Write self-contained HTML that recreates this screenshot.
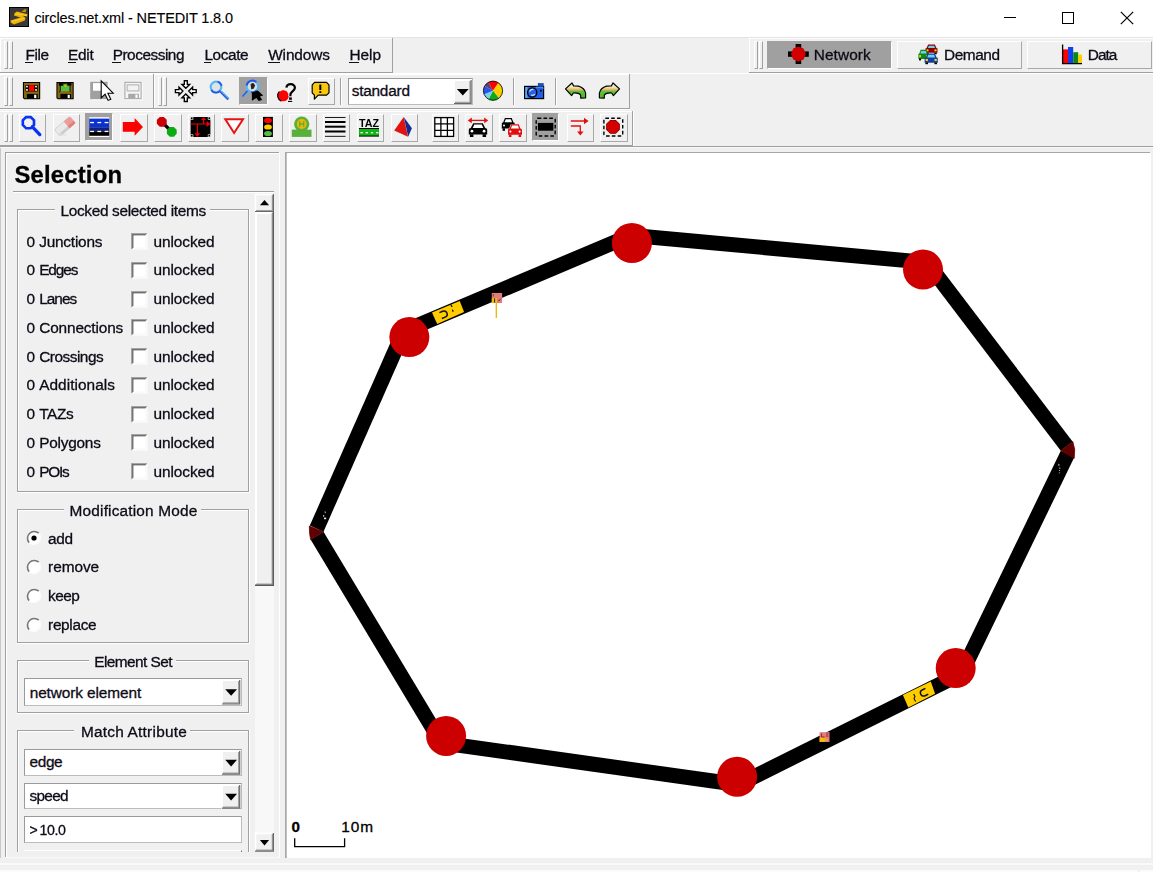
<!DOCTYPE html>
<html><head><meta charset="utf-8"><title>circles.net.xml - NETEDIT 1.8.0</title>
<style>
html,body{margin:0;padding:0}
body{width:1153px;height:872px;position:relative;overflow:hidden;background:#f0f0f0;font-family:"Liberation Sans",sans-serif;color:#0e0a16}
#w{position:absolute;left:0;top:0;width:1153px;height:872px;overflow:hidden;filter:blur(0.45px)}
#w>div,#w>span,#w>svg{position:absolute}
.t{white-space:nowrap;line-height:1;-webkit-text-stroke:0.3px currentColor}
svg{overflow:visible}
</style></head><body><div id="w">
<div style="left:0px;top:0px;width:1153px;height:37px;background:#fff"></div>
<svg style="left:9px;top:7px" width="20" height="20"><rect width="20" height="20" fill="#000"/><rect x="1" y="1" width="18" height="18" fill="#393939"/><path d="M5.5 6.2 L8 4.6 L18.5 7.2 L18 9.4 L13.5 8.6 L16.6 11 L15.8 13.4 L5 17.6 L2 15.8 L1.4 13.6 L11.6 10.4 L5 8.4 Z" fill="#f0b400"/><path d="M12.6 4.4 L15.6 2.2 L17.4 2.6 L16.6 5.2 L14.4 5 Z" fill="#c79500"/><path d="M6.4 6.6 L17.6 8.6 M3 14.6 L14.6 11.2" stroke="#ffd95a" stroke-width="0.7" fill="none"/></svg>
<span id="title" class="t" style="left:34.4px;top:10.83px;font-size:14.5px;letter-spacing:-0.140px;color:#000;-webkit-text-stroke:0.12px #000">circles.net.xml - NETEDIT 1.8.0</span>
<div style="left:1004px;top:17px;width:12.4px;height:1.1px;background:#000"></div>
<div style="left:1062px;top:12px;width:12px;height:12px;box-sizing:border-box;border:1.2px solid #000"></div>
<svg style="left:1120px;top:11px" width="14" height="14"><path d="M0.8 0.8L13.2 13.2M13.2 0.8L0.8 13.2" stroke="#000" stroke-width="1.2" fill="none"/></svg>
<div style="left:0px;top:37px;width:1153px;height:1px;background:#e4e4e4"></div>
<div style="left:0px;top:38px;width:392px;height:1px;background:#ffffff"></div>
<div style="left:0px;top:38px;width:1px;height:34px;background:#ffffff"></div>
<div style="left:392px;top:38px;width:1px;height:34px;background:#a0a0a0"></div>
<div style="left:0px;top:72px;width:393px;height:1px;background:#a0a0a0"></div>
<div style="left:0px;top:73px;width:1153px;height:1px;background:#ffffff"></div>
<div style="left:4px;top:41px;width:3px;height:28px;background:#f0f0f0;border-left:1px solid #ffffff;border-top:1px solid #ffffff;border-right:1px solid #a0a0a0;border-bottom:1px solid #a0a0a0;box-sizing:border-box;width:4px"></div>
<div style="left:9px;top:41px;width:3px;height:28px;background:#f0f0f0;border-left:1px solid #ffffff;border-top:1px solid #ffffff;border-right:1px solid #a0a0a0;border-bottom:1px solid #a0a0a0;box-sizing:border-box;width:4px"></div>
<span id="mFile" class="t" style="left:25.6px;top:47.46px;font-size:15.4px;letter-spacing:-0.471px;">File</span>
<div style="left:25.1px;top:62.2px;width:7.5px;height:1.1px;background:#111"></div>
<span id="mEdit" class="t" style="left:68.1px;top:47.46px;font-size:15.4px;letter-spacing:-0.277px;">Edit</span>
<div style="left:67.6px;top:62.2px;width:8.5px;height:1.1px;background:#111"></div>
<span id="mProcessing" class="t" style="left:112.7px;top:47.46px;font-size:15.4px;letter-spacing:-0.483px;">Processing</span>
<div style="left:112.2px;top:62.2px;width:8.5px;height:1.1px;background:#111"></div>
<span id="mLocate" class="t" style="left:204.4px;top:47.46px;font-size:15.4px;letter-spacing:-0.384px;">Locate</span>
<div style="left:203.9px;top:62.2px;width:7px;height:1.1px;background:#111"></div>
<span id="mWindows" class="t" style="left:268.2px;top:47.46px;font-size:15.4px;letter-spacing:-0.122px;">Windows</span>
<div style="left:267.7px;top:62.2px;width:12.5px;height:1.1px;background:#111"></div>
<span id="mHelp" class="t" style="left:349.5px;top:47.46px;font-size:15.4px;letter-spacing:-0.053px;">Help</span>
<div style="left:349.0px;top:62.2px;width:9.5px;height:1.1px;background:#111"></div>
<div style="left:749px;top:38px;width:1px;height:34px;background:#ffffff"></div>
<div style="left:749px;top:38px;width:404px;height:1px;background:#ffffff"></div>
<div style="left:749px;top:72px;width:404px;height:1px;background:#a0a0a0"></div>
<div style="left:754px;top:41px;width:3px;height:28px;background:#f0f0f0;border-left:1px solid #ffffff;border-top:1px solid #ffffff;border-right:1px solid #a0a0a0;border-bottom:1px solid #a0a0a0;box-sizing:border-box;width:4px"></div>
<div style="left:759px;top:41px;width:3px;height:28px;background:#f0f0f0;border-left:1px solid #ffffff;border-top:1px solid #ffffff;border-right:1px solid #a0a0a0;border-bottom:1px solid #a0a0a0;box-sizing:border-box;width:4px"></div>
<div style="left:767px;top:41px;width:124.5px;height:27.5px;box-sizing:border-box;background:#a0a0a0;border-left:1px solid #a0a0a0;border-top:1px solid #a0a0a0;border-right:1px solid #ffffff;border-bottom:1px solid #ffffff"></div>
<div style="left:897.3px;top:41px;width:124.5px;height:27.8px;box-sizing:border-box;border-left:1.4px solid #ffffff;border-top:1.4px solid #ffffff;border-right:1.3px solid #a8a8a8;border-bottom:1.3px solid #a8a8a8;"></div>
<div style="left:1027.3px;top:41px;width:124.5px;height:27.8px;box-sizing:border-box;border-left:1.4px solid #ffffff;border-top:1.4px solid #ffffff;border-right:1.3px solid #a8a8a8;border-bottom:1.3px solid #a8a8a8;"></div>
<svg style="left:787.6px;top:44.4px" width="20.8" height="20"><rect x="7.6" y="0" width="5.6" height="20" fill="#000"/><rect x="0" y="7.4" width="20.8" height="5.4" fill="#000"/><path d="M10.4 2.4 L15.6 4.6 L17.8 10 L15.6 15.4 L10.4 17.6 L5.2 15.4 L3 10 L5.2 4.6 Z" fill="#d20000"/></svg>
<svg style="left:0;top:0" width="1153" height="80"><path d="M928.14 44.6 H934.86 L936.54 48.248000000000005 H937.5 V52.856 H925.5 V48.248000000000005 H926.46 Z" fill="#8a0000"/><path d="M928.86 45.752 H934.14 L935.1 48.056000000000004 H927.9 Z" fill="#6fd0f2"/><rect x="926.22" y="52.664" width="2.4000000000000004" height="1.536" fill="#000"/><rect x="934.38" y="52.664" width="2.4000000000000004" height="1.536" fill="#000"/><rect x="926.46" y="49.4" width="2.04" height="1.92" fill="#ffd400"/><rect x="934.5" y="49.4" width="2.04" height="1.92" fill="#ffd400"/><path d="M920.644 49.8 H926.356 L927.784 53.827999999999996 H928.6 V58.916 H918.4 V53.827999999999996 H919.216 Z" fill="#0f8a1a"/><path d="M921.256 51.071999999999996 H925.744 L926.56 53.616 H920.4399999999999 Z" fill="#6fd0f2"/><rect x="919.012" y="58.70399999999999" width="2.04" height="1.696" fill="#000"/><rect x="925.948" y="58.70399999999999" width="2.04" height="1.696" fill="#000"/><rect x="919.216" y="55.099999999999994" width="1.734" height="2.12" fill="#ffd400"/><rect x="926.05" y="55.099999999999994" width="1.734" height="2.12" fill="#ffd400"/><path d="M927.504 53.6 H934.8960000000001 L936.744 57.628 H937.8000000000001 V62.716 H924.6 V57.628 H925.6560000000001 Z" fill="#10409c"/><path d="M928.296 54.872 H934.104 L935.16 57.416000000000004 H927.24 Z" fill="#6fd0f2"/><rect x="925.392" y="62.504000000000005" width="2.64" height="1.696" fill="#000"/><rect x="934.368" y="62.504000000000005" width="2.64" height="1.696" fill="#000"/><rect x="925.6560000000001" y="58.9" width="2.244" height="2.12" fill="#ffd400"/><rect x="934.5" y="58.9" width="2.244" height="2.12" fill="#ffd400"/></svg>
<svg style="left:0;top:0" width="1153" height="80"><rect x="1063" y="49.4" width="5" height="14" fill="#ff0000"/><rect x="1068" y="47" width="5.2" height="16.4" fill="#1040f0"/><rect x="1073.2" y="52.2" width="5" height="11.2" fill="#0a8a14"/><rect x="1078.2" y="54.6" width="3.8" height="8.8" fill="#ffcc00"/><path d="M1062.6 44.4 V63.6 H1082" stroke="#000" stroke-width="1.3" fill="none"/></svg>
<span id="bNetwork" class="t" style="left:813.8px;top:47.36px;font-size:15.4px;letter-spacing:0.074px;">Network</span>
<span id="bDemand" class="t" style="left:944px;top:47.36px;font-size:15.4px;letter-spacing:-0.435px;">Demand</span>
<span id="bData" class="t" style="left:1087.8px;top:47.36px;font-size:15.4px;letter-spacing:-1.005px;">Data</span>
<div style="left:0px;top:74px;width:153px;height:1px;background:#ffffff"></div>
<div style="left:152.5px;top:74px;width:1px;height:35px;background:#a0a0a0"></div>
<div style="left:0px;top:108px;width:153px;height:1px;background:#a0a0a0"></div>
<div style="left:0px;top:109px;width:630px;height:1px;background:#ffffff"></div>
<div style="left:4px;top:77px;width:3px;height:29px;background:#f0f0f0;border-left:1px solid #ffffff;border-top:1px solid #ffffff;border-right:1px solid #a0a0a0;border-bottom:1px solid #a0a0a0;box-sizing:border-box;width:4px"></div>
<div style="left:9px;top:77px;width:3px;height:29px;background:#f0f0f0;border-left:1px solid #ffffff;border-top:1px solid #ffffff;border-right:1px solid #a0a0a0;border-bottom:1px solid #a0a0a0;box-sizing:border-box;width:4px"></div>
<div style="left:154px;top:74px;width:1px;height:35px;background:#ffffff"></div>
<div style="left:154px;top:74px;width:475px;height:1px;background:#ffffff"></div>
<div style="left:628.5px;top:74px;width:1px;height:35px;background:#a0a0a0"></div>
<div style="left:154px;top:108px;width:475.5px;height:1px;background:#a0a0a0"></div>
<div style="left:158px;top:77px;width:3px;height:29px;background:#f0f0f0;border-left:1px solid #ffffff;border-top:1px solid #ffffff;border-right:1px solid #a0a0a0;border-bottom:1px solid #a0a0a0;box-sizing:border-box;width:4px"></div>
<div style="left:163px;top:77px;width:3px;height:29px;background:#f0f0f0;border-left:1px solid #ffffff;border-top:1px solid #ffffff;border-right:1px solid #a0a0a0;border-bottom:1px solid #a0a0a0;box-sizing:border-box;width:4px"></div>
<div style="left:239px;top:77px;width:28.6px;height:27.7px;box-sizing:border-box;background:#a0a0a0;border-left:1px solid #a0a0a0;border-top:1px solid #a0a0a0;border-right:1px solid #ffffff;border-bottom:1px solid #ffffff"></div>
<div style="left:307.6px;top:78px;width:27.2px;height:26.8px;box-sizing:border-box;border-left:1.4px solid #ffffff;border-top:1.4px solid #ffffff;border-right:1.3px solid #a8a8a8;border-bottom:1.3px solid #a8a8a8;"></div>
<div style="left:340px;top:78px;width:1px;height:27px;background:#a0a0a0"></div>
<div style="left:341px;top:78px;width:1px;height:27px;background:#ffffff"></div>
<div style="left:348px;top:77.6px;width:125px;height:27.8px;box-sizing:border-box;background:#fff;border-left:1.2px solid;border-top:1.2px solid;border-right:1px solid;border-bottom:1px solid;border-color:#9a9a9a #bcbcbc #bcbcbc #9a9a9a;"></div>
<span id="standard" class="t" style="left:351.7px;top:83.36px;font-size:15.4px;letter-spacing:-0.230px;">standard</span>
<svg style="left:454.4px;top:79.6px" width="17.6" height="24"><rect width="17.6" height="24" fill="#f0f0f0"/><path d="M0 24 V0 H17.6" stroke="#fff" stroke-width="2" fill="none"/><path d="M16.1 1 V22.5 H1" stroke="#a0a0a0" stroke-width="1.4" fill="none"/><path d="M17.1 0 V23.5 H0" stroke="#696969" stroke-width="1.2" fill="none"/><path d="M2.9000000000000004 9.0 H14.700000000000001 L8.8 15.6 Z" fill="#000"/></svg>
<div style="left:513px;top:78px;width:1px;height:27px;background:#a0a0a0"></div>
<div style="left:514px;top:78px;width:1px;height:27px;background:#ffffff"></div>
<div style="left:554.5px;top:78px;width:1px;height:27px;background:#a0a0a0"></div>
<div style="left:555.5px;top:78px;width:1px;height:27px;background:#ffffff"></div>
<svg style="left:0;top:0" width="1153" height="110"><path d="M22.9 82 H40.2 V99.3 H24.197499999999998 L22.9 98.0025 Z" fill="#000"/><path d="M23.98125 83.08125 H39.118750000000006 V98.21875 H24.63 L23.98125 97.57 Z" fill="#87690c"/><rect x="26.90" y="93.89" width="10.81" height="4.54" fill="#000"/><rect x="34.14" y="94.76" width="2.16" height="3.35" fill="#fff"/><rect x="25.49" y="85.03" width="12.22" height="6.49" fill="#000"/><rect x="28.95" y="85.14" width="5.41" height="6.05" fill="#ff0000"/><rect x="26.04" y="85.78" width="1.84" height="1.62" fill="#e8e8e8"/><rect x="26.04" y="89.03" width="1.84" height="1.73" fill="#e8e8e8"/><rect x="35.12" y="85.78" width="1.84" height="1.62" fill="#e8e8e8"/><rect x="35.12" y="89.03" width="1.84" height="1.73" fill="#e8e8e8"/><path d="M56.4 82 H73.7 V99.3 H57.6975 L56.4 98.0025 Z" fill="#000"/><path d="M57.481249999999996 83.08125 H72.61875 V98.21875 H58.129999999999995 L57.481249999999996 97.57 Z" fill="#87690c"/><rect x="60.40" y="93.89" width="10.81" height="4.54" fill="#000"/><rect x="67.64" y="94.76" width="2.16" height="3.35" fill="#fff"/><rect x="58.99" y="83.08" width="12.22" height="2.60" fill="#000"/><rect x="60.08" y="85.89" width="10.16" height="5.30" fill="#55bb45"/><rect x="63.21" y="83.73" width="4.11" height="2.60" fill="#3da636"/><rect x="64.40" y="84.81" width="1.95" height="1.95" fill="#ffb800"/><path d="M58.77875 83.73 L60.2925 85.67625 V91.29875 L58.995 92.38 M71.32124999999999 83.73 L70.02374999999999 85.67625 V91.29875 L71.105 92.38" stroke="#000" stroke-width="0.9" fill="none"/><rect x="91.2" y="82.8" width="17.4" height="17.4" fill="#fff"/><rect x="90.2" y="81.8" width="17.4" height="17.4" fill="#a0a0a0"/><rect x="93.03" y="83.11" width="10.88" height="7.61" fill="#fff"/><rect x="125.3" y="82.8" width="17.4" height="17.4" fill="#fcfcfc"/><rect x="124.89999999999999" y="82.39999999999999" width="16.2" height="16.2" fill="#f6f6f6" stroke="#b0b0b0" stroke-width="1.2"/><rect x="127.1275" y="84.845" width="11.745" height="6.089999999999999" fill="#f2f2f2" stroke="#b4b4b4" stroke-width="1.1"/><rect x="128.22" y="93.76" width="10.66" height="4.57" fill="#a8a8a8"/><rect x="135.39" y="94.63" width="2.17" height="3.26" fill="#fff"/><polygon points="101.2,80.8 101.2,98.0 105.1,94.2 108.1,100.4 110.8,99.2 107.9,93.2 113.2,93.2" fill="#fff" stroke="#000" stroke-width="1.1" stroke-linejoin="miter"/><polygon points="175.40,89.60 179.00,89.60 179.00,87.20 182.90,91.10 179.00,95.00 179.00,92.60 175.40,92.60" fill="#fff" stroke="#000" stroke-width="1.35" stroke-linejoin="miter"/><polygon points="187.30,80.70 187.30,84.30 189.70,84.30 185.80,88.20 181.90,84.30 184.30,84.30 184.30,80.70" fill="#fff" stroke="#000" stroke-width="1.35" stroke-linejoin="miter"/><polygon points="196.20,92.60 192.60,92.60 192.60,95.00 188.70,91.10 192.60,87.20 192.60,89.60 196.20,89.60" fill="#fff" stroke="#000" stroke-width="1.35" stroke-linejoin="miter"/><polygon points="184.30,101.50 184.30,97.90 181.90,97.90 185.80,94.00 189.70,97.90 187.30,97.90 187.30,101.50" fill="#fff" stroke="#000" stroke-width="1.35" stroke-linejoin="miter"/><path d="M220.6 91.6 L228.4 99.4" stroke="#2a5fe0" stroke-width="2.6" stroke-linecap="butt"/><path d="M221.4 91.2 L229 98.6" stroke="#58b8f4" stroke-width="1.2"/><circle cx="216" cy="87" r="5.3" fill="#e2e2e6" stroke="#58b8f4" stroke-width="2.2"/><path d="M211.2 90 A5.6 5.6 0 0 0 220.4 90.6 M217.6 81.5 A5.7 5.7 0 0 1 221.6 85.8" stroke="#2456e4" stroke-width="1.7" fill="none"/><path d="M248 90.6 L242.6 96.6" stroke="#2a5fe0" stroke-width="2"/><path d="M248.8 91.2 L243.6 96.9" stroke="#58b8f4" stroke-width="1"/><circle cx="252.4" cy="86.5" r="5.7" fill="#dcdcdc" stroke="#58b8f4" stroke-width="2"/><path d="M246.6 85.6 A5.9 5.9 0 0 1 256.4 82 M256.8 90.6 A5.9 5.9 0 0 1 251 92.2" stroke="#2456e4" stroke-width="1.9" fill="none"/><path d="M250.6 84 l2.6 -1.2 l2 2.6 l-1.6 3.4 l-2.4 0.4 z" fill="#222"/><polygon points="251.9,92.6 257.8,90.6 263.2,95.5 260,96.6 262.2,100 258.6,101 256.4,98 251.9,100.8" fill="#000"/><circle cx="283.3" cy="95.8" r="5.5" fill="#ff0000"/><path d="M279.4 91.4 A6 6 0 0 0 281.4 101.2" stroke="#000" stroke-width="1.2" fill="none"/><path d="M281.6 91.6 l1.6 -1.6 l1.2 1.8 l2 -1 l0.4 2.4" fill="#ff0000"/><path d="M286.4 87.6 C286.8 83.2 294.9 82.8 294.9 87.8 C294.9 91 290.4 91.4 290.4 95 V96" stroke="#f4f4f4" stroke-width="4" fill="none"/><path d="M286.4 87.6 C286.8 83.2 294.9 82.8 294.9 87.8 C294.9 91 290.4 91.4 290.4 95 V96.2" stroke="#000" stroke-width="2.2" fill="none"/><rect x="289.1" y="97.4" width="2.7" height="2.4" fill="#000"/><path d="M288 101.4 H292.2" stroke="#000" stroke-width="1.1"/><path d="M314.6 82.4 H326.6 L329 84.8 V92.8 L326.6 95.2 H318.2 L314.4 99.2 V95.2 L312.2 92.8 V84.8 Z" fill="#f8c80e" stroke="#000" stroke-width="1.2" stroke-linejoin="round"/><rect x="319.3" y="84.6" width="2" height="5.4" fill="#000"/><rect x="319.3" y="91.2" width="2" height="1.8" fill="#000"/><path d="M493 90.7 L488.49 82.22 A9.6 9.6 0 0 1 498.51 82.84 Z" fill="#ff0000"/><path d="M493 90.7 L498.51 82.84 A9.6 9.6 0 0 1 498.91 98.26 Z" fill="#ffcc00"/><path d="M493 90.7 L498.91 98.26 A9.6 9.6 0 0 1 488.49 99.18 Z" fill="#10aa18"/><path d="M493 90.7 L488.49 99.18 A9.6 9.6 0 0 1 484.10 94.30 Z" fill="#7ad0f4"/><path d="M493 90.7 L484.10 94.30 A9.6 9.6 0 0 1 484.69 85.90 Z" fill="#2456e8"/><path d="M493 90.7 L484.69 85.90 A9.6 9.6 0 0 1 488.49 82.22 Z" fill="#6a3a7a"/><circle cx="493" cy="90.7" r="9.6" fill="none" stroke="#111" stroke-width="0.9"/><rect x="524.6" y="86.4" width="19" height="12.2" fill="#1f5ee6" stroke="#000" stroke-width="1.2"/><rect x="525.3" y="87" width="2.2" height="11" fill="#5fa8f0"/><rect x="538.2" y="83.6" width="5" height="2.6" fill="#1a50c8" stroke="#0a2a80" stroke-width="0.6"/><circle cx="532.2" cy="92.5" r="4.6" fill="#2860e8" stroke="#000" stroke-width="1.3"/><path d="M529.6 91.6 A3 3 0 0 1 533.4 89.6 M531 95 A3 3 0 0 0 534.8 94" stroke="#cfe6ff" stroke-width="1.3" fill="none"/><rect x="540" y="89.8" width="1.7" height="1.7" fill="#000"/><path d="M536 87.2 H543 V89" stroke="#5fa8f0" stroke-width="0.9" fill="none"/><defs><linearGradient id="ug" x1="0" y1="0" x2="0" y2="1"><stop offset="0" stop-color="#f4f4e6"/><stop offset="0.28" stop-color="#f2e6b4"/><stop offset="0.46" stop-color="#dcae66"/><stop offset="0.56" stop-color="#5cc234"/><stop offset="1" stop-color="#44b828"/></linearGradient></defs><path d="M565.5 88.9 L572 83 L573.6 85.9 L578.4 86.1 Q584.6 88 585.6 93 L585.6 97.8 L580.8 98.2 L580.6 95 Q578.8 92.6 573.4 93 L571.6 95.6 Z" fill="url(#ug)" stroke="#000" stroke-width="1.2" stroke-linejoin="round"/><g transform="translate(1185 0) scale(-1 1)"><path d="M565.5 88.9 L572 83 L573.6 85.9 L578.4 86.1 Q584.6 88 585.6 93 L585.6 97.8 L580.8 98.2 L580.6 95 Q578.8 92.6 573.4 93 L571.6 95.6 Z" fill="url(#ug)" stroke="#000" stroke-width="1.2" stroke-linejoin="round"/></g></svg>
<div style="left:0px;top:111px;width:633px;height:1px;background:#ffffff"></div>
<div style="left:632px;top:111px;width:1px;height:35px;background:#a0a0a0"></div>
<div style="left:633px;top:111px;width:1px;height:35px;background:#ffffff"></div>
<div style="left:4px;top:114px;width:3px;height:28px;background:#f0f0f0;border-left:1px solid #ffffff;border-top:1px solid #ffffff;border-right:1px solid #a0a0a0;border-bottom:1px solid #a0a0a0;box-sizing:border-box;width:4px"></div>
<div style="left:9px;top:114px;width:3px;height:28px;background:#f0f0f0;border-left:1px solid #ffffff;border-top:1px solid #ffffff;border-right:1px solid #a0a0a0;border-bottom:1px solid #a0a0a0;box-sizing:border-box;width:4px"></div>
<div style="left:18.7px;top:114.3px;width:27.8px;height:27.4px;box-sizing:border-box;border-left:1.4px solid #ffffff;border-top:1.4px solid #ffffff;border-right:1.3px solid #a8a8a8;border-bottom:1.3px solid #a8a8a8;"></div>
<div style="left:52.5px;top:114.3px;width:27.8px;height:27.4px;box-sizing:border-box;border-left:1.4px solid #ffffff;border-top:1.4px solid #ffffff;border-right:1.3px solid #a8a8a8;border-bottom:1.3px solid #a8a8a8;"></div>
<div style="left:85.3px;top:113.3px;width:28.2px;height:27.8px;box-sizing:border-box;background:#a0a0a0;border-left:1px solid #a0a0a0;border-top:1px solid #a0a0a0;border-right:1px solid #ffffff;border-bottom:1px solid #ffffff"></div>
<div style="left:119.9px;top:114.3px;width:27.8px;height:27.4px;box-sizing:border-box;border-left:1.4px solid #ffffff;border-top:1.4px solid #ffffff;border-right:1.3px solid #a8a8a8;border-bottom:1.3px solid #a8a8a8;"></div>
<div style="left:153.9px;top:114.3px;width:27.8px;height:27.4px;box-sizing:border-box;border-left:1.4px solid #ffffff;border-top:1.4px solid #ffffff;border-right:1.3px solid #a8a8a8;border-bottom:1.3px solid #a8a8a8;"></div>
<div style="left:187.5px;top:114.3px;width:27.8px;height:27.4px;box-sizing:border-box;border-left:1.4px solid #ffffff;border-top:1.4px solid #ffffff;border-right:1.3px solid #a8a8a8;border-bottom:1.3px solid #a8a8a8;"></div>
<div style="left:221.2px;top:114.3px;width:27.8px;height:27.4px;box-sizing:border-box;border-left:1.4px solid #ffffff;border-top:1.4px solid #ffffff;border-right:1.3px solid #a8a8a8;border-bottom:1.3px solid #a8a8a8;"></div>
<div style="left:254.9px;top:114.3px;width:27.8px;height:27.4px;box-sizing:border-box;border-left:1.4px solid #ffffff;border-top:1.4px solid #ffffff;border-right:1.3px solid #a8a8a8;border-bottom:1.3px solid #a8a8a8;"></div>
<div style="left:288.9px;top:114.3px;width:27.8px;height:27.4px;box-sizing:border-box;border-left:1.4px solid #ffffff;border-top:1.4px solid #ffffff;border-right:1.3px solid #a8a8a8;border-bottom:1.3px solid #a8a8a8;"></div>
<div style="left:322.7px;top:114.3px;width:27.8px;height:27.4px;box-sizing:border-box;border-left:1.4px solid #ffffff;border-top:1.4px solid #ffffff;border-right:1.3px solid #a8a8a8;border-bottom:1.3px solid #a8a8a8;"></div>
<div style="left:356.7px;top:114.3px;width:27.8px;height:27.4px;box-sizing:border-box;border-left:1.4px solid #ffffff;border-top:1.4px solid #ffffff;border-right:1.3px solid #a8a8a8;border-bottom:1.3px solid #a8a8a8;"></div>
<div style="left:390.5px;top:114.3px;width:27.8px;height:27.4px;box-sizing:border-box;border-left:1.4px solid #ffffff;border-top:1.4px solid #ffffff;border-right:1.3px solid #a8a8a8;border-bottom:1.3px solid #a8a8a8;"></div>
<div style="left:431.7px;top:114.3px;width:27.8px;height:27.4px;box-sizing:border-box;border-left:1.4px solid #ffffff;border-top:1.4px solid #ffffff;border-right:1.3px solid #a8a8a8;border-bottom:1.3px solid #a8a8a8;"></div>
<div style="left:465.3px;top:114.3px;width:27.8px;height:27.4px;box-sizing:border-box;border-left:1.4px solid #ffffff;border-top:1.4px solid #ffffff;border-right:1.3px solid #a8a8a8;border-bottom:1.3px solid #a8a8a8;"></div>
<div style="left:499.0px;top:114.3px;width:27.8px;height:27.4px;box-sizing:border-box;border-left:1.4px solid #ffffff;border-top:1.4px solid #ffffff;border-right:1.3px solid #a8a8a8;border-bottom:1.3px solid #a8a8a8;"></div>
<div style="left:532.2px;top:113.4px;width:27.3px;height:27.3px;box-sizing:border-box;background:#a0a0a0;border-left:1px solid #a0a0a0;border-top:1px solid #a0a0a0;border-right:1px solid #ffffff;border-bottom:1px solid #ffffff"></div>
<div style="left:566.6px;top:114.3px;width:27.8px;height:27.4px;box-sizing:border-box;border-left:1.4px solid #ffffff;border-top:1.4px solid #ffffff;border-right:1.3px solid #a8a8a8;border-bottom:1.3px solid #a8a8a8;"></div>
<div style="left:600.3px;top:114.3px;width:27.8px;height:27.4px;box-sizing:border-box;border-left:1.4px solid #ffffff;border-top:1.4px solid #ffffff;border-right:1.3px solid #a8a8a8;border-bottom:1.3px solid #a8a8a8;"></div>
<svg style="left:0;top:0" width="1153" height="150"><path d="M32.4 126.8 L39.8 134.6" stroke="#0a32f0" stroke-width="3.3" stroke-linecap="round"/><path d="M26.1 117.1 H30.7 L34 120.4 V125 L30.7 128.3 H26.1 L22.8 125 V120.4 Z" fill="none" stroke="#0a32f0" stroke-width="2.6" stroke-linejoin="miter"/><g transform="rotate(-41 65 126)"><rect x="54.6" y="121.8" width="20.4" height="8.8" rx="2" fill="#e9e9e9" stroke="#c8c8c8" stroke-width="0.7"/><path d="M67 121.8 H73 a2 2 0 0 1 2 2 V128.6 a2 2 0 0 1 -2 2 H67 Z" fill="#ee9c98"/><rect x="54.8" y="128.2" width="12.2" height="2.4" fill="#cdcdcd"/><rect x="67" y="128" width="8" height="2.6" fill="#e27f78"/></g><ellipse cx="62" cy="134.8" rx="5" ry="0.8" fill="#e0e0e0"/><rect x="89.2" y="117.2" width="20" height="19.8" fill="#fff"/><rect x="89.2" y="118.6" width="20" height="8.6" fill="#0a32d2"/><rect x="89.2" y="127.2" width="20" height="4" fill="#10207c"/><rect x="89.2" y="131.2" width="20" height="4.6" fill="#000"/><rect x="90.2" y="121.9" width="3.8" height="1.3" fill="#fff"/><rect x="90.2" y="130.8" width="3.8" height="1.3" fill="#fff"/><rect x="97.4" y="121.9" width="3.8" height="1.3" fill="#fff"/><rect x="97.4" y="130.8" width="3.8" height="1.3" fill="#fff"/><rect x="104.6" y="121.9" width="3.8" height="1.3" fill="#fff"/><rect x="104.6" y="130.8" width="3.8" height="1.3" fill="#fff"/><polygon points="122.8,122.1 134.6,122.1 134.6,118 143,127 134.6,135.8 134.6,131.8 122.8,131.8" fill="#ff0000"/><path d="M162 122 L171.6 131.6" stroke="#000" stroke-width="3.2"/><polygon points="166.70,123.83 163.83,126.70 159.77,126.70 156.90,123.83 156.90,119.77 159.77,116.90 163.83,116.90 166.70,119.77" fill="#cc0000"/><polygon points="176.70,133.83 173.83,136.70 169.77,136.70 166.90,133.83 166.90,129.77 169.77,126.90 173.83,126.90 176.70,129.77" fill="#0aac14"/><rect x="190.6" y="117" width="19.8" height="20" fill="#000"/><rect x="190.4" y="116.8" width="2.9" height="2.9" fill="#f0f0f0"/><rect x="191.0" y="117.39999999999999" width="1.6" height="1.6" fill="#000"/><rect x="207.8" y="116.8" width="2.9" height="2.9" fill="#f0f0f0"/><rect x="208.4" y="117.39999999999999" width="1.6" height="1.6" fill="#000"/><rect x="190.4" y="134.4" width="2.9" height="2.9" fill="#f0f0f0"/><rect x="191.0" y="135.0" width="1.6" height="1.6" fill="#000"/><rect x="207.8" y="134.4" width="2.9" height="2.9" fill="#f0f0f0"/><rect x="208.4" y="135.0" width="1.6" height="1.6" fill="#000"/><path d="M190.6 124 H208 M197.4 124 V134 M203.6 124 V119" stroke="#f00000" stroke-width="1.2" fill="none"/><polygon points="206.6,121 210.6,124 206.6,127" fill="#f00000"/><polygon points="194.6,133.2 200.2,133.2 197.4,137" fill="#f00000"/><polygon points="201,120 206.2,120 203.6,116.9" fill="#f00000"/><polygon points="225.3,119.3 243,119.3 234.1,133" fill="#fff" stroke="#e21414" stroke-width="2" stroke-linejoin="miter"/><rect x="263" y="116.9" width="9.9" height="20.1" fill="#000"/><ellipse cx="268" cy="120.4" rx="3.9" ry="2.6" fill="#ff0000"/><ellipse cx="268" cy="127" rx="3.9" ry="2.6" fill="#ffcc00"/><ellipse cx="268" cy="133.5" rx="3.9" ry="2.6" fill="#55bb44"/><circle cx="301.7" cy="124.2" r="7.6" fill="#5ab03c"/><rect x="291.8" y="129.6" width="19.7" height="7.3" fill="#5ab03c"/><circle cx="301.7" cy="124" r="4.9" fill="#f2b600"/><path d="M299.7 121.2 V126.8 M303.7 121.2 V126.8 M299.7 124 H303.7" stroke="#5ab03c" stroke-width="1.3" fill="none"/><rect x="325" y="117.05" width="20.5" height="0.9" fill="#000"/><rect x="325" y="121.0" width="20.5" height="2" fill="#000"/><rect x="325" y="125.7" width="20.5" height="2" fill="#000"/><rect x="325" y="130.5" width="20.5" height="2" fill="#000"/><rect x="325" y="135.85000000000002" width="20.5" height="0.9" fill="#000"/><text x="359" y="126.7" font-family="Liberation Sans, sans-serif" font-size="11" font-weight="bold" textLength="20" lengthAdjust="spacingAndGlyphs" fill="#000">TAZ</text><rect x="359" y="128" width="20" height="8.6" fill="#000"/><rect x="359" y="129" width="20" height="6.6" fill="#10b414"/><rect x="360.4" y="132.1" width="2.4" height="1.2" fill="#fff"/><rect x="365.6" y="132.1" width="2.4" height="1.2" fill="#fff"/><rect x="370.8" y="132.1" width="2.4" height="1.2" fill="#fff"/><rect x="376" y="132.1" width="2.4" height="1.2" fill="#fff"/><polygon points="394.2,130.6 403.7,116.9 408,136.8" fill="#e01212"/><polygon points="403.9,117.2 411.9,128.2 408.2,136.8" fill="#142a90"/><rect x="434.8" y="117.6" width="18.8" height="18.8" fill="#fff" stroke="#000" stroke-width="1.3"/><path d="M440.9 117.6 V136.4 M447.4 117.6 V136.4 M434.8 123.9 H453.6 M434.8 130.4 H453.6" stroke="#000" stroke-width="1.3"/><path d="M469.6 120.4 H486.4" stroke="#e01010" stroke-width="1.3"/><polygon points="467.8,120.4 471.8,117.6 471.8,123.2" fill="#e01010"/><polygon points="488.2,120.4 484.2,117.6 484.2,123.2" fill="#e01010"/><path d="M473.216 123.2 H482.784 L485.36 128.168 H486.096 Q487.2 128.44400000000002 487.2 130.1 V134.516 H468.8 V130.1 Q468.8 128.44400000000002 469.904 128.168 H470.64 Z" fill="#000"/><path d="M474.32 124.58 H481.68 L483.336 127.892 H472.664 Z" fill="#fff"/><rect x="469.904" y="134.24" width="3.4959999999999996" height="2.7600000000000002" fill="#000"/><rect x="482.6" y="134.24" width="3.4959999999999996" height="2.7600000000000002" fill="#000"/><circle cx="471.928" cy="131.204" r="1.38" fill="#fff"/><circle cx="484.072" cy="131.204" r="1.38" fill="#fff"/><path d="M504.92 118 H511.68 L513.5 122.608 H514.02 Q514.8 122.864 514.8 124.4 V128.496 H501.8 V124.4 Q501.8 122.864 502.58 122.608 H503.1 Z" fill="#000"/><path d="M505.7 119.28 H510.90000000000003 L512.07 122.352 H504.53000000000003 Z" fill="#fff"/><rect x="502.58" y="128.24" width="2.47" height="2.5600000000000005" fill="#000"/><rect x="511.55" y="128.24" width="2.47" height="2.5600000000000005" fill="#000"/><circle cx="504.01" cy="125.424" r="0.975" fill="#fff"/><circle cx="512.59" cy="125.424" r="0.975" fill="#fff"/><path d="M509 130.6 V129 L510.6 124.4 H519.6 L521.2 129 V130.6" fill="#f0f0f0"/><path d="M511.36 124.2 H518.64 L520.6 128.808 H521.16 Q522 129.064 522 130.6 V134.696 H508 V130.6 Q508 129.064 508.84 128.808 H509.4 Z" fill="#e01010"/><path d="M512.2 125.48 H517.8 L519.06 128.552 H510.94 Z" fill="#fff"/><rect x="508.84" y="134.44" width="2.66" height="2.5600000000000005" fill="#e01010"/><rect x="518.5" y="134.44" width="2.66" height="2.5600000000000005" fill="#e01010"/><circle cx="510.38" cy="131.624" r="1.05" fill="#fff"/><circle cx="519.62" cy="131.624" r="1.05" fill="#fff"/><rect x="536.2" y="118.2" width="19" height="17.8" fill="none" stroke="#000" stroke-width="1.4" stroke-dasharray="3.6 2.2" rx="1.5"/><rect x="537.9" y="122.9" width="15.5" height="7.8" fill="#000"/><path d="M570.8 121 H585 M570.8 126 H580.3 V132" stroke="#e01010" stroke-width="1.3" fill="none"/><polygon points="584,117.8 588.6,121 584,124.2" fill="#e01010"/><polygon points="577,131.4 583.6,131.4 580.3,135.6" fill="#e01010"/><rect x="603.9" y="118.2" width="18.8" height="17.8" fill="none" stroke="#000" stroke-width="1.4" stroke-dasharray="3.6 2.2" rx="1.5"/><polygon points="619.84,129.63 615.83,133.64 610.17,133.64 606.16,129.63 606.16,123.97 610.17,119.96 615.83,119.96 619.84,123.97" fill="#6a0000"/><circle cx="613" cy="126.8" r="6.6" fill="#d40000"/></svg>
<div style="left:0px;top:145px;width:633px;height:2px;background:#a0a0a0"></div>
<div style="left:633px;top:146px;width:520px;height:1px;background:#a0a0a0"></div>
<div style="left:0px;top:147px;width:1153px;height:1px;background:#f8f8f8"></div>
<div style="left:0px;top:148px;width:1px;height:710px;background:#c8c8c8"></div>
<div style="left:5px;top:152px;width:274px;height:1px;background:#a0a0a0"></div>
<div style="left:5px;top:152px;width:1px;height:706px;background:#a0a0a0"></div>
<div style="left:6px;top:153px;width:273px;height:1px;background:#ffffff"></div>
<div style="left:6px;top:153px;width:1px;height:705px;background:#ffffff"></div>
<div style="left:279px;top:152px;width:1px;height:706px;background:#ffffff"></div>
<span id="sel" class="t" style="left:14.4px;top:162.75px;font-size:23.8px;letter-spacing:0.225px;font-weight:bold;color:#000">Selection</span>
<div style="left:13px;top:191.2px;width:260.5px;height:1px;background:#a0a0a0"></div>
<div style="left:13px;top:192.2px;width:260.5px;height:1px;background:#ffffff"></div>
<div style="left:17px;top:209px;width:38px;height:1px;background:#a0a0a0"></div>
<div style="left:18px;top:210px;width:37px;height:1px;background:#ffffff"></div>
<div style="left:210px;top:209px;width:39px;height:1px;background:#a0a0a0"></div>
<div style="left:210px;top:210px;width:38px;height:1px;background:#ffffff"></div>
<div style="left:17px;top:209px;width:1px;height:283px;background:#a0a0a0"></div>
<div style="left:18px;top:210px;width:1px;height:281px;background:#ffffff"></div>
<div style="left:248px;top:209px;width:1px;height:283px;background:#a0a0a0"></div>
<div style="left:249px;top:209px;width:1px;height:284px;background:#ffffff"></div>
<div style="left:17px;top:491px;width:232px;height:1px;background:#a0a0a0"></div>
<div style="left:17px;top:492px;width:233px;height:1px;background:#ffffff"></div>
<span id="gb1" class="t" style="left:60.5px;top:202.76px;font-size:15.4px;letter-spacing:-0.329px;">Locked selected items</span>
<span id="z0" class="t" style="left:26.6px;top:233.66px;font-size:15.4px;letter-spacing:0.438px;">0</span>
<span id="r0" class="t" style="left:39.2px;top:233.66px;font-size:15.4px;letter-spacing:-0.215px;">Junctions</span>
<span id="u0" class="t" style="left:153.6px;top:233.66px;font-size:15.4px;letter-spacing:-0.089px;">unlocked</span>
<svg style="left:131.2px;top:233.00px" width="17" height="17"><rect width="16.6" height="16.8" fill="#fafafa"/><path d="M0 0 H16.6 L14 2.6 H2.6 V14.2 L0 16.8 Z" fill="#a4a4a4"/><path d="M1.1 1.1 H15.5 L14 2.6 H2.6 V14.2 L1.1 15.7 Z" fill="#707070"/><rect x="2.6" y="2.6" width="11.5" height="11.6" fill="#fff"/></svg>
<span id="z1" class="t" style="left:26.6px;top:262.41px;font-size:15.4px;letter-spacing:0.438px;">0</span>
<span id="r1" class="t" style="left:39.2px;top:262.41px;font-size:15.4px;letter-spacing:-1.111px;">Edges</span>
<span id="u1" class="t" style="left:153.6px;top:262.41px;font-size:15.4px;letter-spacing:-0.089px;">unlocked</span>
<svg style="left:131.2px;top:261.75px" width="17" height="17"><rect width="16.6" height="16.8" fill="#fafafa"/><path d="M0 0 H16.6 L14 2.6 H2.6 V14.2 L0 16.8 Z" fill="#a4a4a4"/><path d="M1.1 1.1 H15.5 L14 2.6 H2.6 V14.2 L1.1 15.7 Z" fill="#707070"/><rect x="2.6" y="2.6" width="11.5" height="11.6" fill="#fff"/></svg>
<span id="z2" class="t" style="left:26.6px;top:291.16px;font-size:15.4px;letter-spacing:0.438px;">0</span>
<span id="r2" class="t" style="left:39.2px;top:291.16px;font-size:15.4px;letter-spacing:-0.986px;">Lanes</span>
<span id="u2" class="t" style="left:153.6px;top:291.16px;font-size:15.4px;letter-spacing:-0.089px;">unlocked</span>
<svg style="left:131.2px;top:290.50px" width="17" height="17"><rect width="16.6" height="16.8" fill="#fafafa"/><path d="M0 0 H16.6 L14 2.6 H2.6 V14.2 L0 16.8 Z" fill="#a4a4a4"/><path d="M1.1 1.1 H15.5 L14 2.6 H2.6 V14.2 L1.1 15.7 Z" fill="#707070"/><rect x="2.6" y="2.6" width="11.5" height="11.6" fill="#fff"/></svg>
<span id="z3" class="t" style="left:26.6px;top:319.91px;font-size:15.4px;letter-spacing:0.438px;">0</span>
<span id="r3" class="t" style="left:39.2px;top:319.91px;font-size:15.4px;letter-spacing:-0.146px;">Connections</span>
<span id="u3" class="t" style="left:153.6px;top:319.91px;font-size:15.4px;letter-spacing:-0.089px;">unlocked</span>
<svg style="left:131.2px;top:319.25px" width="17" height="17"><rect width="16.6" height="16.8" fill="#fafafa"/><path d="M0 0 H16.6 L14 2.6 H2.6 V14.2 L0 16.8 Z" fill="#a4a4a4"/><path d="M1.1 1.1 H15.5 L14 2.6 H2.6 V14.2 L1.1 15.7 Z" fill="#707070"/><rect x="2.6" y="2.6" width="11.5" height="11.6" fill="#fff"/></svg>
<span id="z4" class="t" style="left:26.6px;top:348.66px;font-size:15.4px;letter-spacing:0.438px;">0</span>
<span id="r4" class="t" style="left:39.2px;top:348.66px;font-size:15.4px;letter-spacing:-0.491px;">Crossings</span>
<span id="u4" class="t" style="left:153.6px;top:348.66px;font-size:15.4px;letter-spacing:-0.089px;">unlocked</span>
<svg style="left:131.2px;top:348.00px" width="17" height="17"><rect width="16.6" height="16.8" fill="#fafafa"/><path d="M0 0 H16.6 L14 2.6 H2.6 V14.2 L0 16.8 Z" fill="#a4a4a4"/><path d="M1.1 1.1 H15.5 L14 2.6 H2.6 V14.2 L1.1 15.7 Z" fill="#707070"/><rect x="2.6" y="2.6" width="11.5" height="11.6" fill="#fff"/></svg>
<span id="z5" class="t" style="left:26.6px;top:377.41px;font-size:15.4px;letter-spacing:0.438px;">0</span>
<span id="r5" class="t" style="left:39.2px;top:377.41px;font-size:15.4px;letter-spacing:0.040px;">Additionals</span>
<span id="u5" class="t" style="left:153.6px;top:377.41px;font-size:15.4px;letter-spacing:-0.089px;">unlocked</span>
<svg style="left:131.2px;top:376.75px" width="17" height="17"><rect width="16.6" height="16.8" fill="#fafafa"/><path d="M0 0 H16.6 L14 2.6 H2.6 V14.2 L0 16.8 Z" fill="#a4a4a4"/><path d="M1.1 1.1 H15.5 L14 2.6 H2.6 V14.2 L1.1 15.7 Z" fill="#707070"/><rect x="2.6" y="2.6" width="11.5" height="11.6" fill="#fff"/></svg>
<span id="z6" class="t" style="left:26.6px;top:406.16px;font-size:15.4px;letter-spacing:0.438px;">0</span>
<span id="r6" class="t" style="left:39.2px;top:406.16px;font-size:15.4px;letter-spacing:-0.408px;">TAZs</span>
<span id="u6" class="t" style="left:153.6px;top:406.16px;font-size:15.4px;letter-spacing:-0.089px;">unlocked</span>
<svg style="left:131.2px;top:405.50px" width="17" height="17"><rect width="16.6" height="16.8" fill="#fafafa"/><path d="M0 0 H16.6 L14 2.6 H2.6 V14.2 L0 16.8 Z" fill="#a4a4a4"/><path d="M1.1 1.1 H15.5 L14 2.6 H2.6 V14.2 L1.1 15.7 Z" fill="#707070"/><rect x="2.6" y="2.6" width="11.5" height="11.6" fill="#fff"/></svg>
<span id="z7" class="t" style="left:26.6px;top:434.91px;font-size:15.4px;letter-spacing:0.438px;">0</span>
<span id="r7" class="t" style="left:39.2px;top:434.91px;font-size:15.4px;letter-spacing:-0.232px;">Polygons</span>
<span id="u7" class="t" style="left:153.6px;top:434.91px;font-size:15.4px;letter-spacing:-0.089px;">unlocked</span>
<svg style="left:131.2px;top:434.25px" width="17" height="17"><rect width="16.6" height="16.8" fill="#fafafa"/><path d="M0 0 H16.6 L14 2.6 H2.6 V14.2 L0 16.8 Z" fill="#a4a4a4"/><path d="M1.1 1.1 H15.5 L14 2.6 H2.6 V14.2 L1.1 15.7 Z" fill="#707070"/><rect x="2.6" y="2.6" width="11.5" height="11.6" fill="#fff"/></svg>
<span id="z8" class="t" style="left:26.6px;top:463.66px;font-size:15.4px;letter-spacing:0.438px;">0</span>
<span id="r8" class="t" style="left:39.2px;top:463.66px;font-size:15.4px;letter-spacing:-1.273px;">POIs</span>
<span id="u8" class="t" style="left:153.6px;top:463.66px;font-size:15.4px;letter-spacing:-0.089px;">unlocked</span>
<svg style="left:131.2px;top:463.00px" width="17" height="17"><rect width="16.6" height="16.8" fill="#fafafa"/><path d="M0 0 H16.6 L14 2.6 H2.6 V14.2 L0 16.8 Z" fill="#a4a4a4"/><path d="M1.1 1.1 H15.5 L14 2.6 H2.6 V14.2 L1.1 15.7 Z" fill="#707070"/><rect x="2.6" y="2.6" width="11.5" height="11.6" fill="#fff"/></svg>
<div style="left:17px;top:509px;width:47px;height:1px;background:#a0a0a0"></div>
<div style="left:18px;top:510px;width:46px;height:1px;background:#ffffff"></div>
<div style="left:201px;top:509px;width:48px;height:1px;background:#a0a0a0"></div>
<div style="left:201px;top:510px;width:47px;height:1px;background:#ffffff"></div>
<div style="left:17px;top:509px;width:1px;height:134.3px;background:#a0a0a0"></div>
<div style="left:18px;top:510px;width:1px;height:132.3px;background:#ffffff"></div>
<div style="left:248px;top:509px;width:1px;height:134.3px;background:#a0a0a0"></div>
<div style="left:249px;top:509px;width:1px;height:135.3px;background:#ffffff"></div>
<div style="left:17px;top:642.3px;width:232px;height:1px;background:#a0a0a0"></div>
<div style="left:17px;top:643.3px;width:233px;height:1px;background:#ffffff"></div>
<span id="gb2" class="t" style="left:69.6px;top:502.66px;font-size:15.4px;letter-spacing:0.169px;">Modification Mode</span>
<span id="rd0" class="t" style="left:48.1px;top:530.66px;font-size:15.4px;letter-spacing:-0.294px;">add</span>
<svg style="left:26.200000000000003px;top:530.2px" width="16" height="16"><circle cx="8" cy="8" r="6.6" fill="#fff"/><path d="M3.2 12.8 A6.8 6.8 0 0 1 12.8 3.2" stroke="#777" stroke-width="1.6" fill="none"/><path d="M12.8 3.2 A6.8 6.8 0 0 1 3.2 12.8" stroke="#fbfbfb" stroke-width="1.4" fill="none"/><circle cx="8" cy="8" r="2.6" fill="#000"/></svg>
<span id="rd1" class="t" style="left:48.1px;top:559.49px;font-size:15.4px;letter-spacing:-0.066px;">remove</span>
<svg style="left:26.200000000000003px;top:559.0300000000001px" width="16" height="16"><circle cx="8" cy="8" r="6.6" fill="#fff"/><path d="M3.2 12.8 A6.8 6.8 0 0 1 12.8 3.2" stroke="#777" stroke-width="1.6" fill="none"/><path d="M12.8 3.2 A6.8 6.8 0 0 1 3.2 12.8" stroke="#fbfbfb" stroke-width="1.4" fill="none"/></svg>
<span id="rd2" class="t" style="left:48.1px;top:588.32px;font-size:15.4px;letter-spacing:-0.563px;">keep</span>
<svg style="left:26.200000000000003px;top:587.86px" width="16" height="16"><circle cx="8" cy="8" r="6.6" fill="#fff"/><path d="M3.2 12.8 A6.8 6.8 0 0 1 12.8 3.2" stroke="#777" stroke-width="1.6" fill="none"/><path d="M12.8 3.2 A6.8 6.8 0 0 1 3.2 12.8" stroke="#fbfbfb" stroke-width="1.4" fill="none"/></svg>
<span id="rd3" class="t" style="left:48.1px;top:617.15px;font-size:15.4px;letter-spacing:-0.330px;">replace</span>
<svg style="left:26.200000000000003px;top:616.69px" width="16" height="16"><circle cx="8" cy="8" r="6.6" fill="#fff"/><path d="M3.2 12.8 A6.8 6.8 0 0 1 12.8 3.2" stroke="#777" stroke-width="1.6" fill="none"/><path d="M12.8 3.2 A6.8 6.8 0 0 1 3.2 12.8" stroke="#fbfbfb" stroke-width="1.4" fill="none"/></svg>
<div style="left:17px;top:660px;width:72px;height:1px;background:#a0a0a0"></div>
<div style="left:18px;top:661px;width:71px;height:1px;background:#ffffff"></div>
<div style="left:176.4px;top:660px;width:72.6px;height:1px;background:#a0a0a0"></div>
<div style="left:176.4px;top:661px;width:71.6px;height:1px;background:#ffffff"></div>
<div style="left:17px;top:660px;width:1px;height:53.3px;background:#a0a0a0"></div>
<div style="left:18px;top:661px;width:1px;height:51.3px;background:#ffffff"></div>
<div style="left:248px;top:660px;width:1px;height:53.3px;background:#a0a0a0"></div>
<div style="left:249px;top:660px;width:1px;height:54.3px;background:#ffffff"></div>
<div style="left:17px;top:712.3px;width:232px;height:1px;background:#a0a0a0"></div>
<div style="left:17px;top:713.3px;width:233px;height:1px;background:#ffffff"></div>
<span id="gb3" class="t" style="left:94.3px;top:653.96px;font-size:15.4px;letter-spacing:-0.564px;">Element Set</span>
<div style="left:24px;top:678px;width:218px;height:27.6px;box-sizing:border-box;background:#fff;border-left:1.2px solid;border-top:1.2px solid;border-right:1px solid;border-bottom:1px solid;border-color:#9a9a9a #bcbcbc #bcbcbc #9a9a9a;"></div>
<span id="c1" class="t" style="left:29.7px;top:684.56px;font-size:15.4px;letter-spacing:-0.102px;">network element</span>
<svg style="left:222.3px;top:680.2px" width="18.2" height="24.5"><rect width="18.2" height="24.5" fill="#f0f0f0"/><path d="M0 24.5 V0 H18.2" stroke="#fff" stroke-width="2" fill="none"/><path d="M16.7 1 V23.0 H1" stroke="#a0a0a0" stroke-width="1.4" fill="none"/><path d="M17.7 0 V24.0 H0" stroke="#696969" stroke-width="1.2" fill="none"/><path d="M3.1999999999999993 9.25 H15.0 L9.1 15.85 Z" fill="#000"/></svg>
<div style="left:17px;top:730px;width:57px;height:1px;background:#a0a0a0"></div>
<div style="left:18px;top:731px;width:56px;height:1px;background:#ffffff"></div>
<div style="left:190.3px;top:730px;width:58.69999999999999px;height:1px;background:#a0a0a0"></div>
<div style="left:190.3px;top:731px;width:57.69999999999999px;height:1px;background:#ffffff"></div>
<div style="left:17px;top:730px;width:1px;height:140px;background:#a0a0a0"></div>
<div style="left:18px;top:731px;width:1px;height:138px;background:#ffffff"></div>
<div style="left:248px;top:730px;width:1px;height:140px;background:#a0a0a0"></div>
<div style="left:249px;top:730px;width:1px;height:141px;background:#ffffff"></div>
<div style="left:17px;top:869px;width:232px;height:1px;background:#a0a0a0"></div>
<div style="left:17px;top:870px;width:233px;height:1px;background:#ffffff"></div>
<span id="gb4" class="t" style="left:80.9px;top:723.86px;font-size:15.4px;letter-spacing:0.231px;">Match Attribute</span>
<div style="left:24px;top:749px;width:218px;height:26.6px;box-sizing:border-box;background:#fff;border-left:1.2px solid;border-top:1.2px solid;border-right:1px solid;border-bottom:1px solid;border-color:#9a9a9a #bcbcbc #bcbcbc #9a9a9a;"></div>
<span id="c2" class="t" style="left:29.6px;top:754.46px;font-size:15.4px;letter-spacing:-0.417px;">edge</span>
<svg style="left:222.3px;top:751px" width="18.2" height="23.6"><rect width="18.2" height="23.6" fill="#f0f0f0"/><path d="M0 23.6 V0 H18.2" stroke="#fff" stroke-width="2" fill="none"/><path d="M16.7 1 V22.1 H1" stroke="#a0a0a0" stroke-width="1.4" fill="none"/><path d="M17.7 0 V23.1 H0" stroke="#696969" stroke-width="1.2" fill="none"/><path d="M3.1999999999999993 8.8 H15.0 L9.1 15.4 Z" fill="#000"/></svg>
<div style="left:24px;top:782.5px;width:218px;height:26.6px;box-sizing:border-box;background:#fff;border-left:1.2px solid;border-top:1.2px solid;border-right:1px solid;border-bottom:1px solid;border-color:#9a9a9a #bcbcbc #bcbcbc #9a9a9a;"></div>
<span id="c3" class="t" style="left:29.6px;top:787.96px;font-size:15.4px;letter-spacing:-0.760px;">speed</span>
<svg style="left:222.3px;top:784.5px" width="18.2" height="23.6"><rect width="18.2" height="23.6" fill="#f0f0f0"/><path d="M0 23.6 V0 H18.2" stroke="#fff" stroke-width="2" fill="none"/><path d="M16.7 1 V22.1 H1" stroke="#a0a0a0" stroke-width="1.4" fill="none"/><path d="M17.7 0 V23.1 H0" stroke="#696969" stroke-width="1.2" fill="none"/><path d="M3.1999999999999993 8.8 H15.0 L9.1 15.4 Z" fill="#000"/></svg>
<div style="left:24px;top:816.4px;width:218px;height:26.4px;box-sizing:border-box;background:#fff;border-left:1.2px solid;border-top:1.2px solid;border-right:1px solid;border-bottom:1px solid;border-color:#9a9a9a #bcbcbc #bcbcbc #9a9a9a;"></div>
<span id="c4a" class="t" style="left:29.6px;top:823.35px;font-size:14px;letter-spacing:-0.188px;">&gt;</span>
<span id="c4" class="t" style="left:39.4px;top:823.18px;font-size:14.2px;letter-spacing:-0.338px;">10.0</span>
<div style="left:24px;top:850.4px;width:218px;height:8px;background:#f0f0f0;border-top:1.2px solid #fdfdfd;border-right:1px solid #777;box-sizing:border-box"></div>
<div style="left:7px;top:852px;width:272px;height:6px;background:#f0f0f0"></div>
<div style="left:5px;top:856.6px;width:275px;height:1.2px;background:#fafafa"></div>
<div style="left:255px;top:193.5px;width:19px;height:658.5px;background:#f8f8f8"></div>
<svg style="left:255px;top:193.5px" width="19" height="18.3"><rect width="19" height="18.3" fill="#f0f0f0"/><path d="M0.5 18.3 V0.5 H19" stroke="#fff" stroke-width="1.6" fill="none"/><path d="M17.4 1 V16.7 H1" stroke="#a0a0a0" stroke-width="1.3" fill="none"/><path d="M18.4 0 V17.7 H0" stroke="#696969" stroke-width="1.2" fill="none"/><path d="M4.9 11.350000000000001 H14.1 L9.5 5.95 Z" fill="#000"/></svg>
<svg style="left:255px;top:212px" width="19" height="374"><rect width="19" height="374" fill="#f0f0f0"/><path d="M1 374 V1 H19" stroke="#fff" stroke-width="2" fill="none"/><path d="M17.2 1 V372.2 H1" stroke="#a0a0a0" stroke-width="1.2" fill="none"/><path d="M18.3 0 V373.3 H0" stroke="#5a5a5a" stroke-width="1.4" fill="none"/></svg>
<svg style="left:255px;top:833.2px" width="19" height="18.8"><rect width="19" height="18.8" fill="#f0f0f0"/><path d="M0.5 18.8 V0.5 H19" stroke="#fff" stroke-width="1.6" fill="none"/><path d="M17.4 1 V17.2 H1" stroke="#a0a0a0" stroke-width="1.3" fill="none"/><path d="M18.4 0 V18.2 H0" stroke="#696969" stroke-width="1.2" fill="none"/><path d="M4.9 7.0 H14.1 L9.5 12.4 Z" fill="#000"/></svg>
<div style="left:285px;top:152px;width:865px;height:1.3px;background:#a6a6a6"></div>
<div style="left:285px;top:152px;width:1px;height:706px;background:#a6a6a6"></div>
<div style="left:286px;top:153px;width:1px;height:705px;background:#c0c0c0"></div>
<div style="left:287px;top:153.4px;width:864px;height:704.6px;background:#fff"></div>
<svg style="left:0;top:0" width="1153" height="872"><polygon points="631.9,243.0 409.4,337.1 403.5,323.2 626.1,229.2" fill="#000"/><polygon points="409.4,337.1 323.5,531.7 309.8,525.6 395.6,331.0" fill="#000"/><polygon points="323.5,531.7 446.1,735.9 433.2,743.6 310.6,539.4" fill="#000"/><polygon points="446.1,735.9 737.1,776.8 735.0,791.7 444.0,750.8" fill="#000"/><polygon points="737.1,776.8 955.7,668.1 962.4,681.5 743.8,790.2" fill="#000"/><polygon points="955.7,668.1 1060.8,450.8 1074.3,457.3 969.2,674.6" fill="#000"/><polygon points="1060.8,450.8 923.0,269.6 934.9,260.5 1072.7,441.7" fill="#000"/><polygon points="923.0,269.6 631.9,243.0 633.3,228.1 924.4,254.7" fill="#000"/><polygon points="1060.8,450.8 1072.8,441.6 1074.7,449.4 1074.2,458.3" fill="#600000" stroke="#600000" stroke-width="0.8"/><polygon points="323.5,531.7 309.3,526.1 309.6,533 310.6,539.6" fill="#600000" stroke="#600000" stroke-width="0.8"/><circle cx="631.9" cy="243.0" r="20" fill="#cc0000"/><circle cx="409.35" cy="337.05" r="20" fill="#cc0000"/><circle cx="923.0" cy="269.6" r="20" fill="#cc0000"/><circle cx="955.7" cy="668.1" r="20" fill="#cc0000"/><circle cx="737.1" cy="776.8" r="20" fill="#cc0000"/><circle cx="446.1" cy="735.9" r="20" fill="#cc0000"/><polygon points="432,312.5 459.7,301.1 464.1,312.1 437.2,323.9" fill="#ffcc00"/><g transform="translate(443.4 314.4) rotate(-112.5)"><path d="M-3.2 -3 V0.6 A3.2 3.2 0 0 0 3.2 0.6 V-3" stroke="#111" stroke-width="1.5" fill="none"/></g><path d="M450.8 304.6 L452.2 307 M452.4 309.6 L453.2 311.8" stroke="#111" stroke-width="1.2"/><polygon points="902.9,694.9 930.8,681.5 935.1,693.7 908.3,707.6" fill="#ffcc00"/><g transform="translate(924.2 692.6) rotate(63)"><path d="M-3.2 -3 V0.6 A3.2 3.2 0 0 0 3.2 0.6 V-3" stroke="#111" stroke-width="1.5" fill="none"/></g><path d="M913.6 694 L915 696.6 L914 698.6 L915.6 701.6" stroke="#111" stroke-width="1.1" fill="none"/><rect x="491.8" y="293" width="10.3" height="10" fill="#df7e7e"/><rect x="491.8" y="298.2" width="5.2" height="4.6" fill="#f2c000"/><path d="M494.6 298.4 V302.6" stroke="#222" stroke-width="1"/><path d="M494 294.2 L492.8 295.3 L494 296.4 M498.2 299.8 L499.2 301 L500.8 298.6" stroke="#a01818" stroke-width="0.9" fill="none"/><path d="M496.3 302.9 V318" stroke="#f0b400" stroke-width="1.3"/><rect x="819.6" y="732.2" width="9.9" height="9.8" fill="#df7e7e"/><rect x="819.6" y="737.6" width="5.2" height="4.3" fill="#f2c000"/><path d="M821.6 733.4 V737 H824.6 M826 734 H828.4 M826 736 H828.4" stroke="#a01818" stroke-width="0.9" fill="none"/><path d="M825.2 738.4 L826.4 741 L828 738.6" stroke="#f2c000" stroke-width="1" fill="none"/><path d="M1058.6 463.6 l1.2 1.6 l-1.4 0.6 z" fill="#fff"/><rect x="1059.3" y="467.6" width="1" height="1.1" fill="#ddd"/><rect x="1059.1" y="470" width="0.9" height="1" fill="#ccc"/><rect x="1058.9" y="472.4" width="0.9" height="1" fill="#bbb"/><path d="M324.6 511.4 l1.4 0.4 l-1 1.6 z" fill="#eee"/><rect x="323" y="515.2" width="1.2" height="1.4" fill="#ddd"/><rect x="324" y="517.6" width="2.2" height="1.6" fill="#e6e6e6"/><path d="M294.7 838.2 V846.6 H344.6 V838.2" stroke="#000" stroke-width="1.3" fill="none"/></svg>
<span id="s0" class="t" style="left:291.6px;top:818.83px;font-size:15.2px;letter-spacing:0.250px;color:#000;font-weight:bold">0</span>
<span id="s10" class="t" style="left:341.3px;top:818.66px;font-size:15.4px;letter-spacing:0.878px;color:#000">10m</span>
<div style="left:0px;top:858px;width:1153px;height:14px;background:#f0f0f0"></div>
<div style="left:0px;top:863px;width:1153px;height:1.5px;background:#f9f9f9"></div>
<div style="left:0px;top:869.5px;width:1138px;height:3px;background:#fbfbfb"></div>
<div style="left:1140px;top:870px;width:13px;height:2px;background:#fbfbfb"></div>
</div></body></html>
